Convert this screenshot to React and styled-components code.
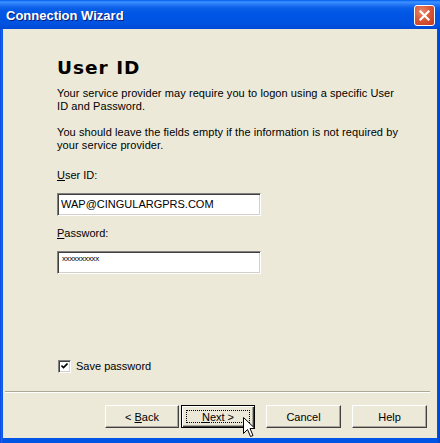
import * as React from "react";
import styled, { createGlobalStyle } from "styled-components";

const GlobalStyle = createGlobalStyle`
  html, body {
    margin: 0;
    padding: 0;
    background: #ffffff;
  }
`;

const Window = styled.div`
  position: relative;
  width: 440px;
  height: 443px;
  display: flex;
  flex-direction: column;
  background: linear-gradient(to right, #0831d9 0px, #166aee 1px, #0055e5 3px, #0055e5 437px, #0041c8 440px);
  font-family: "Liberation Sans", Arial, sans-serif;
  overflow: hidden;
`;

const TitleBar = styled.div`
  height: 29px;
  flex: none;
  display: flex;
  align-items: center;
  justify-content: space-between;
  padding: 0 5px 0 6px;
  box-sizing: border-box;
  background: linear-gradient(
    to bottom,
    #0058ee 0px,
    #3d95ff 2px,
    #2a7cf8 4px,
    #0a5fe8 8px,
    #0055e5 14px,
    #0053e1 24px,
    #0048d3 29px
  );
`;

const Title = styled.span`
  color: #ffffff;
  font-weight: bold;
  font-size: 13px;
  text-shadow: 1px 1px 0 #0a1e7a;
  margin-top: 1px;
`;

const CloseButton = styled.div`
  width: 21px;
  height: 21px;
  box-sizing: border-box;
  border: 1px solid #ffffff;
  border-radius: 3px;
  background: radial-gradient(circle at 35% 30%, #e98b6c 0%, #d9593a 45%, #c3381a 100%);
  display: flex;
  align-items: center;
  justify-content: center;
  margin-top: 1px;
`;

const Client = styled.div`
  flex: 1;
  margin: 0 3px 5px 3px;
  background: #ece9d8;
  display: flex;
  flex-direction: column;
`;

const Content = styled.div`
  flex: 1;
  display: flex;
  flex-direction: column;
  padding: 28px 20px 18px 54px;
`;

const Heading = styled.h1`
  margin: 0;
  font-family: "DejaVu Sans", Verdana, sans-serif;
  font-weight: bold;
  font-size: 18.5px;
  line-height: 22px;
  letter-spacing: 1px;
  color: #000000;
`;

const Text = styled.p`
  margin: ${(p) => p.top || 0}px 0 0 0;
  font-size: 11px;
  line-height: 13px;
  letter-spacing: 0.08px;
  color: #000000;
`;

const Label = styled.label`
  display: block;
  margin-top: ${(p) => p.top}px;
  font-size: 11px;
  line-height: 13px;
  color: #000000;

  u {
    text-decoration: underline;
    text-underline-offset: 1px;
  }
`;

const Field = styled.div`
  margin-top: ${(p) => p.top}px;
  width: 204px;
  height: 23px;
  box-sizing: border-box;
  background: #ffffff;
  border-top: 1px solid #808080;
  border-left: 1px solid #808080;
  border-bottom: 1px solid #ffffff;
  border-right: 1px solid #ffffff;
  box-shadow: inset 1px 1px 0 #404040, inset -1px -1px 0 #d4d0c8;
  padding: ${(p) => (p.secret ? "2px 0 0 4px" : "4px 0 0 3px")};
  font-size: ${(p) => (p.secret ? 8 : 11)}px;
  line-height: ${(p) => (p.secret ? 10 : 13)}px;
  letter-spacing: ${(p) => (p.secret ? "-0.3px" : "0")};
  color: #000000;
  white-space: nowrap;
`;

const CheckRow = styled.div`
  margin-top: auto;
  display: flex;
  align-items: center;
  gap: 5px;
  padding-left: 1px;
  font-size: 11px;
  line-height: 13px;
`;

const CheckBox = styled.div`
  width: 13px;
  height: 13px;
  box-sizing: border-box;
  background: #ffffff;
  border-top: 1px solid #808080;
  border-left: 1px solid #808080;
  border-bottom: 1px solid #ffffff;
  border-right: 1px solid #ffffff;
  box-shadow: inset 1px 1px 0 #404040, inset -1px -1px 0 #d4d0c8;
  display: flex;
  align-items: center;
  justify-content: center;
`;

const Separator = styled.div`
  height: 0;
  margin: 0 7px 0 2px;
  border-top: 1px solid #aca899;
  border-bottom: 1px solid #ffffff;
`;

const ButtonRow = styled.div`
  display: flex;
  justify-content: flex-end;
  padding: 12px 10px 10px 0;
`;

const Button = styled.div`
  width: ${(p) => (p.wide ? 75 : 74)}px;
  height: 23px;
  box-sizing: border-box;
  margin-left: ${(p) => p.gap || 0}px;
  background: #ece9d8;
  border-top: 1px solid #ffffff;
  border-left: 1px solid #ffffff;
  border-right: 1px solid #404040;
  border-bottom: 1px solid #404040;
  box-shadow: inset -1px -1px 0 #aca899;
  display: flex;
  align-items: center;
  justify-content: center;
  font-size: 11px;
  color: #000000;
  position: relative;
  white-space: pre;

  ${(p) =>
    p.primary &&
    `
    border: 1px solid #000000;
    box-shadow: inset 1px 1px 0 #ffffff, inset -1px -1px 0 #404040, inset -2px -2px 0 #aca899;
    &::after {
      content: "";
      position: absolute;
      left: 4px;
      top: 4px;
      right: 4px;
      bottom: 4px;
      border: 1px dotted #000000;
    }
  `}

  u {
    text-decoration: underline;
    text-underline-offset: 1px;
  }
`;

const Cursor = styled.svg`
  position: absolute;
  left: 243px;
  top: 417px;
`;

export default function App() {
  return (
    <>
      <GlobalStyle />
      <Window>
        <TitleBar>
          <Title>Connection Wizard</Title>
          <CloseButton>
            <svg width="11" height="11" viewBox="0 0 11 11">
              <path d="M1.5 1.5 L9.5 9.5 M9.5 1.5 L1.5 9.5" stroke="#ffffff" strokeWidth="2.2" strokeLinecap="square" />
            </svg>
          </CloseButton>
        </TitleBar>
        <Client>
          <Content>
            <Heading>User ID</Heading>
            <Text top={8}>
              Your service provider may require you to logon using a specific User
              <br />
              ID and Password.
            </Text>
            <Text top={13}>
              You should leave the fields empty if the information is not required by
              <br />
              your service provider.
            </Text>
            <Label top={17}>
              <u>U</u>ser ID:
            </Label>
            <Field top={11}>WAP@CINGULARGPRS.COM</Field>
            <Label top={11}>
              <u>P</u>assword:
            </Label>
            <Field top={11} secret>
              xxxxxxxxxx
            </Field>
            <CheckRow>
              <CheckBox>
                <svg width="7" height="7" viewBox="0 0 7 7">
                  <path d="M0.5 2.5 L2.5 4.5 L6.5 0.5" stroke="#000000" strokeWidth="1.6" fill="none" />
                </svg>
              </CheckBox>
              <span>Save password</span>
            </CheckRow>
          </Content>
          <Separator />
          <ButtonRow>
            <Button>
              <span>
                &lt; <u>B</u>ack
              </span>
            </Button>
            <Button primary gap={2}>
              <span>
                <u>N</u>ext &gt;
              </span>
            </Button>
            <Button wide gap={11}>
              Cancel
            </Button>
            <Button wide gap={11}>
              Help
            </Button>
          </ButtonRow>
        </Client>
        <Cursor width="13" height="21" viewBox="0 0 13 21">
          <path
            d="M0.5 0.5 L0.5 16.5 L4.5 12.5 L7.5 19.5 L10 18.5 L7 11.5 L12 11.5 Z"
            fill="#ffffff"
            stroke="#000000"
            strokeWidth="1"
            strokeLinejoin="miter"
          />
        </Cursor>
      </Window>
    </>
  );
}
